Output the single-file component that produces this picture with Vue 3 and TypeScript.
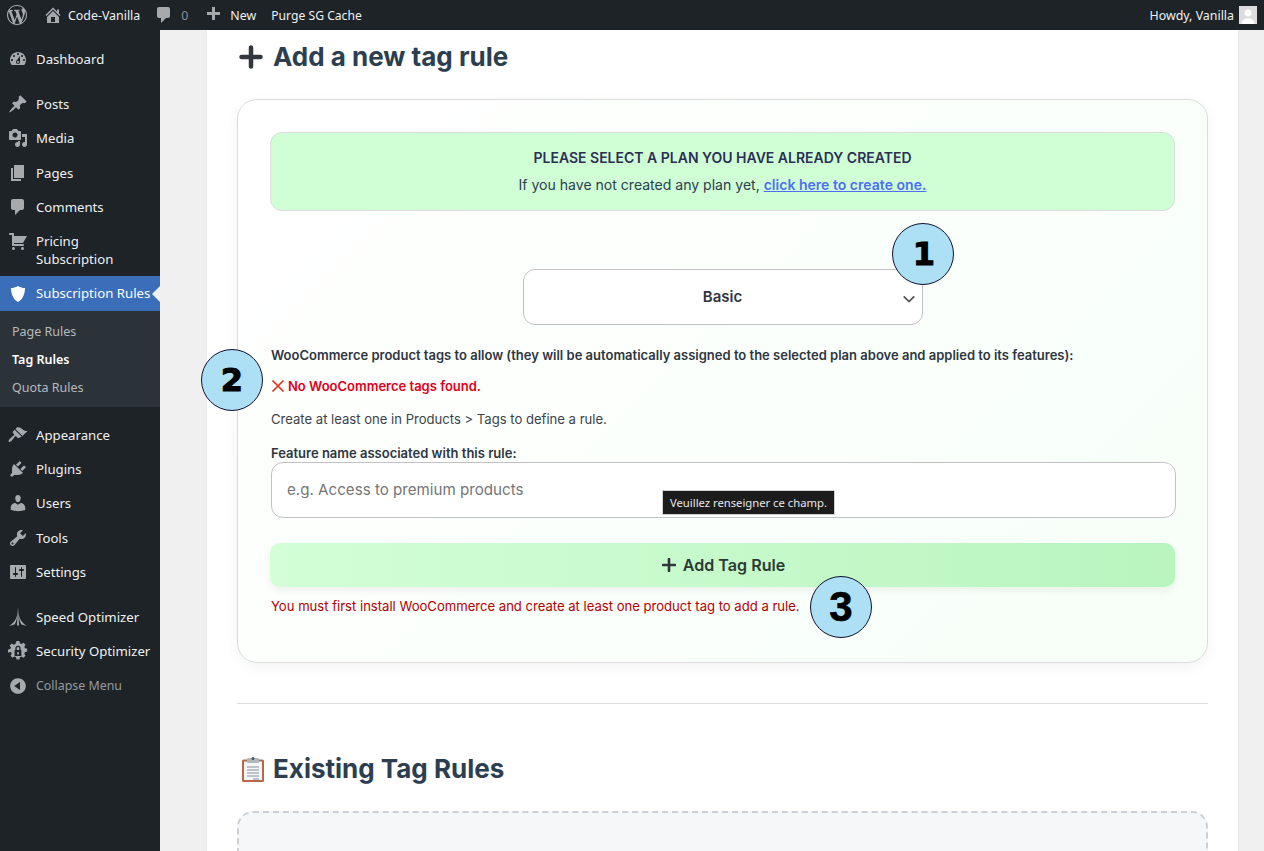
<script setup lang="ts">
// Admin page with the tag rule form, sidebar icons are dashicons paths (20x20)
interface MenuItem { label: string; icon: string; cls?: string }

const icons: Record<string, string> = {
  wp: 'M20 10c0-5.51-4.49-10-10-10C4.48 0 0 4.49 0 10c0 5.52 4.48 10 10 10 5.51 0 10-4.48 10-10zM7.78 15.37L4.37 6.22c.55-.02 1.17-.08 1.17-.08.5-.06.44-1.13-.06-1.11 0 0-1.45.11-2.37.11-.18 0-.37 0-.58-.01C4.12 2.69 6.87 1.11 10 1.11c2.33 0 4.45.87 6.05 2.34-.68-.11-1.65.39-1.65 1.58 0 .74.45 1.36.9 2.1.35.61.55 1.36.55 2.46 0 1.49-1.4 5-1.4 5l-3.03-8.37c.54-.02.82-.17.82-.17.5-.05.44-1.25-.06-1.22 0 0-1.44.12-2.38.12-.87 0-2.33-.12-2.33-.12-.5-.03-.56 1.2-.06 1.22l.92.08 1.26 3.41zM17.41 10c.24-.64.74-1.87.43-4.25.7 1.29 1.05 2.71 1.05 4.25 0 3.29-1.73 6.24-4.4 7.78.97-2.59 1.94-5.2 2.92-7.78zM6.1 18.09C3.12 16.65 1.11 13.53 1.11 10c0-1.3.23-2.48.72-3.59C3.25 10.3 4.67 14.2 6.1 18.09zm4.03-6.63l2.58 6.98c-.86.29-1.76.45-2.71.45-.79 0-1.57-.11-2.29-.33.81-2.38 1.62-4.74 2.42-7.1z',
  home: 'M16 8.5l1.53 1.53-1.06 1.06L10 4.62l-6.47 6.47-1.06-1.06L10 2.5l4 4v-2h2v4zm-6-2.46l6 5.99V18H4v-5.97zM12 17v-5H8v5h4z',
  comment: 'M5 2h9c1.1 0 2 .9 2 2v7c0 1.1-.9 2-2 2h-2l-5 5v-5H5c-1.1 0-2-.9-2-2V4c0-1.1.9-2 2-2z',
  plus: 'M17 7v3h-5v5H9v-5H4V7h5V2h3v5h5z',
  dashboard: 'M3.76 16h12.48c1.1-1.37 1.76-3.11 1.76-5 0-4.42-3.58-8-8-8s-8 3.58-8 8c0 1.89.66 3.63 1.76 5zM10 4c.55 0 1 .45 1 1s-.45 1-1 1-1-.45-1-1 .45-1 1-1zM6 6c.55 0 1 .45 1 1s-.45 1-1 1-1-.45-1-1 .45-1 1-1zm8 0c.55 0 1 .45 1 1s-.45 1-1 1-1-.45-1-1 .45-1 1-1zm-5.37 5.55L12 7v6c0 1.1-.9 2-2 2s-2-.9-2-2c0-.57.24-1.08.63-1.45zM4 10c.55 0 1 .45 1 1s-.45 1-1 1-1-.45-1-1 .45-1 1-1zm12 0c.55 0 1 .45 1 1s-.45 1-1 1-1-.45-1-1 .45-1 1-1zm-5 3c0-.55-.45-1-1-1s-1 .45-1 1 .45 1 1 1 1-.45 1-1z',
  pin: 'M10.44 3.02l1.82-1.82 6.36 6.35-1.83 1.82c-1.05-.68-2.48-.57-3.41.36l-.75.75c-.92.93-1.04 2.35-.35 3.41l-1.83 1.82-2.41-2.41-2.8 2.79c-.42.42-3.38 2.71-3.8 2.29s1.86-3.39 2.28-3.81l2.79-2.79L4.1 9.36l1.83-1.82c1.05.69 2.48.57 3.4-.36l.75-.75c.93-.92 1.05-2.35.36-3.41z',
  media: 'M13 11V4c0-.55-.45-1-1-1h-1.67L9 1H5L3.67 3H2c-.55 0-1 .45-1 1v7c0 .55.45 1 1 1h10c.55 0 1-.45 1-1zM7 4.5c1.38 0 2.5 1.12 2.5 2.5S8.38 9.5 7 9.5 4.5 8.38 4.5 7 5.62 4.5 7 4.5zM14 6h5v10.5c0 1.38-1.12 2.5-2.5 2.5S14 17.88 14 16.5s1.12-2.5 2.5-2.5c.17 0 .34.02.5.05V9h-3V6zm-4 8.05V13h2v3.5c0 1.38-1.12 2.5-2.5 2.5S7 17.88 7 16.5 8.12 14 9.5 14c.17 0 .34.02.5.05z',
  page: 'M6 15V2h10v13H6zm-1 1h8v2H3V5h2v11z',
  cart: 'M6 13h9c.55 0 1 .45 1 1s-.45 1-1 1H5c-.55 0-1-.45-1-1V4H2c-.55 0-1-.45-1-1s.45-1 1-1h3c.55 0 1 .45 1 1v2h13l-4 7H6v1zm-.5 3c.83 0 1.5.67 1.5 1.5S6.33 19 5.5 19 4 18.33 4 17.5 4.67 16 5.5 16zm9 0c.83 0 1.5.67 1.5 1.5s-.67 1.5-1.5 1.5-1.5-.67-1.5-1.5.67-1.5 1.5-1.5z',
  shield: 'M10 2s3 2 7 2c0 11-7 14-7 14S3 15 3 4c4 0 7-2 7-2z',
  brush: 'M14.48 11.06L7.41 3.99l1.5-1.5c.5-.56 2.3-.47 3.51.32 1.21.8 1.43 1.28 2.91 2.1 1.18.64 2.45 1.26 4.45.85zm-.71.71L6.7 4.7 4.93 6.47c-.39.39-.39 1.02 0 1.41l1.06 1.06c.39.39.39 1.03 0 1.42-.6.6-1.43 1.11-2.21 1.69-.35.26-.7.53-1.01.84C1.43 13.71 0 16.06.72 16.78c.72.72 3.07-.71 3.71-1.98.31-.31.58-.66.84-1.01.58-.78 1.09-1.61 1.69-2.21.39-.39 1.03-.39 1.42 0l1.06 1.06c.39.39 1.02.39 1.41 0z',
  plugin: 'M13.11 4.36L9.87 7.6 8 5.73l3.24-3.24c.35-.34 1.05-.2 1.56.32.52.51.66 1.21.31 1.55zm-8 1.77l.91-1.12 9.01 9.01-1.19.84c-.71.71-2.63 1.16-3.82 1.16H6.14L4.9 17.26c-.59.59-1.54.59-2.12 0-.59-.58-.59-1.53 0-2.12l1.24-1.24v-3.88c0-1.13.4-3.19 1.09-3.89zm7.26 3.97l3.24-3.24c.34-.35 1.04-.21 1.55.31.52.51.66 1.21.31 1.55l-3.24 3.25z',
  users: 'M10 9.25c-2.27 0-2.73-3.44-2.73-3.44C7 4.02 7.82 2 9.97 2c2.16 0 2.98 2.02 2.71 3.81 0 0-.41 3.44-2.68 3.44zm0 2.57L12.72 10c2.39 0 4.52 2.33 4.52 4.53v2.49s-3.65 1.13-7.24 1.13c-3.65 0-7.24-1.13-7.24-1.13v-2.49c0-2.25 1.94-4.48 4.47-4.48z',
  tools: 'M16.68 9.77c-1.34 1.34-3.3 1.67-4.95.99l-5.41 6.52c-.99.99-2.59.99-3.58 0s-.99-2.59 0-3.57l6.52-5.42c-.68-1.65-.35-3.61.99-4.95 1.28-1.28 3.12-1.62 4.72-1.06l-2.89 2.89 2.82 2.82 2.86-2.87c.53 1.58.18 3.39-1.08 4.65zM3.81 16.21c.4.39 1.04.39 1.43 0 .4-.4.4-1.04 0-1.43-.39-.4-1.03-.4-1.43 0-.39.39-.39 1.03 0 1.43z',
  settings: 'M18 16V4c0-.55-.45-1-1-1H3c-.55 0-1 .45-1 1v12c0 .55.45 1 1 1h14c.55 0 1-.45 1-1zM8 11h1c.55 0 1 .45 1 1s-.45 1-1 1H8v1.5c0 .28-.22.5-.5.5s-.5-.22-.5-.5V13H6c-.55 0-1-.45-1-1s.45-1 1-1h1V5.5c0-.28.22-.5.5-.5s.5.22.5.5V11zm5-2h-1c-.55 0-1-.45-1-1s.45-1 1-1h1V5.5c0-.28.22-.5.5-.5s.5.22.5.5V7h1c.55 0 1 .45 1 1s-.45 1-1 1h-1v5.5c0 .28-.22.5-.5.5s-.5-.22-.5-.5V9z',
  speed: 'M10 0l.55 8 .45 10.5H9L9.45 8zM9.3 6.5C9 11 6.5 15.5 1 19l5.6-1.6C8.3 15 9.2 11 9.3 6.5zM10.7 6.5c.3 4.5 2.8 9 8.3 12.5l-5.6-1.6C11.7 15 10.8 11 10.7 6.5z',
  security: 'M8.6 0h2.8l.5 2.2 1.6.7 2-1.2 2 2-1.2 2 .7 1.6 2.2.5v2.8l-2.2.5-.7 1.6 1.2 2-2 2-2-1.2-1.6.7-.5 2.2H8.6l-.5-2.2-1.6-.7-2 1.2-2-2 1.2-2-.7-1.6L0 11.4V8.6l2.2-.5.7-1.6-1.2-2 2-2 2 1.2 1.6-.7zM10 4.8A2.6 2.6 0 0 0 7.4 7.4V9H6.6v6h6.8V9h-.8V7.4A2.6 2.6 0 0 0 10 4.8zm0 1.3c.7 0 1.3.6 1.3 1.3V9H8.7V7.4c0-.7.6-1.3 1.3-1.3zM9.2 11h1.6v2.4H9.2z',
  collapse: 'M10 2.16c4.33 0 7.84 3.51 7.84 7.84s-3.51 7.84-7.84 7.84S2.16 14.33 2.16 10 5.71 2.16 10 2.16zm2 11.72V6.12L6.18 9.97z',
}

const topMenu: MenuItem[] = [
  { label: 'Posts', icon: icons.pin },
  { label: 'Media', icon: icons.media },
  { label: 'Pages', icon: icons.page },
  { label: 'Comments', icon: icons.comment },
  { label: 'Pricing Subscription', icon: icons.cart, cls: 'two' },
]
const subMenu = ['Page Rules', 'Tag Rules', 'Quota Rules']
const midMenu: MenuItem[] = [
  { label: 'Appearance', icon: icons.brush },
  { label: 'Plugins', icon: icons.plugin },
  { label: 'Users', icon: icons.users },
  { label: 'Tools', icon: icons.tools },
  { label: 'Settings', icon: icons.settings },
]
const bottomMenu: MenuItem[] = [
  { label: 'Speed Optimizer', icon: icons.speed },
  { label: 'Security Optimizer', icon: icons.security },
  { label: 'Collapse Menu', icon: icons.collapse, cls: 'muted' },
]
</script>

<template>
  <div class="page">
    <header class="adminbar">
      <svg class="bar-ic wp" viewBox="0 0 20 20"><path :d="icons.wp" fill-rule="evenodd" /></svg>
      <span class="bar-item site">
        <svg class="bar-ic" viewBox="0 0 20 20"><path :d="icons.home" fill-rule="evenodd" /></svg>Code-Vanilla
      </span>
      <span class="bar-item comments">
        <svg class="bar-ic" viewBox="0 0 20 20"><path :d="icons.comment" /></svg><span class="count">0</span>
      </span>
      <span class="bar-item new">
        <svg class="bar-ic" viewBox="0 0 20 20"><path :d="icons.plus" /></svg>New
      </span>
      <span class="bar-item purge">Purge SG Cache</span>
      <span class="bar-item howdy">
        Howdy, Vanilla
        <svg class="avatar" viewBox="0 0 18 18">
          <rect width="18" height="18" fill="#dcdcde" />
          <circle cx="9" cy="7" r="3.4" fill="#fff" />
          <path d="M2.5 18c0-4 3-5.6 6.5-5.6s6.5 1.6 6.5 5.6z" fill="#fff" />
        </svg>
      </span>
    </header>

    <div class="body">
      <nav class="sidebar">
        <a class="menu-row">
          <svg class="menu-ic" viewBox="0 0 20 20"><path :d="icons.dashboard" fill-rule="evenodd" /></svg>
          <span>Dashboard</span>
        </a>
        <div class="sep"></div>
        <a v-for="m in topMenu" :key="m.label" class="menu-row" :class="m.cls">
          <svg class="menu-ic" viewBox="0 0 20 20"><path :d="m.icon" fill-rule="evenodd" /></svg>
          <span>{{ m.label }}</span>
        </a>
        <a class="menu-row active">
          <svg class="menu-ic" viewBox="0 0 20 20"><path :d="icons.shield" /></svg>
          <span>Subscription Rules</span>
        </a>
        <div class="submenu">
          <a v-for="s in subMenu" :key="s" class="sub-row" :class="{ on: s === 'Tag Rules' }">{{ s }}</a>
        </div>
        <div class="sep"></div>
        <a v-for="m in midMenu" :key="m.label" class="menu-row">
          <svg class="menu-ic" viewBox="0 0 20 20"><path :d="m.icon" fill-rule="evenodd" /></svg>
          <span>{{ m.label }}</span>
        </a>
        <div class="sep"></div>
        <a v-for="m in bottomMenu" :key="m.label" class="menu-row" :class="m.cls">
          <svg class="menu-ic" viewBox="0 0 20 20"><path :d="m.icon" fill-rule="evenodd" /></svg>
          <span>{{ m.label }}</span>
        </a>
      </nav>

      <main class="main">
        <div class="panel">
          <h2 class="title">
            <svg class="title-plus" viewBox="0 0 24 24"><path d="M12 2.5v19M2.5 12h19" /></svg>
            Add a new tag rule
          </h2>

          <section class="card">
            <div class="notice">
              <strong>PLEASE SELECT A PLAN YOU HAVE ALREADY CREATED</strong>
              <p>If you have not created any plan yet, <a>click here to create one.</a></p>
            </div>

            <div class="select-wrap">
              <div class="select">
                <span>Basic</span>
                <svg class="chev" viewBox="0 0 12 12"><path d="M1.5 3.8 6 8.2l4.5-4.4" /></svg>
              </div>
              <span class="badge b1">1</span>
            </div>

            <p class="label tags-label">WooCommerce product tags to allow (they will be automatically assigned to the selected plan above and applied to its features):</p>
            <p class="err">
              <svg class="x" viewBox="0 0 14 14"><path d="M1.5 1.5l11 11M12.5 1.5l-11 11" /></svg>
              No WooCommerce tags found.
            </p>
            <p class="help">Create at least one in Products &gt; Tags to define a rule.</p>

            <label class="label feature-label">Feature name associated with this rule:</label>
            <div class="input-wrap">
              <input class="input" type="text" placeholder="e.g. Access to premium products" />
              <span class="tooltip">Veuillez renseigner ce champ.</span>
            </div>

            <button class="add" type="button">
              <svg class="add-plus" viewBox="0 0 14 14"><path d="M7 1v12M1 7h12" /></svg>
              Add Tag Rule
            </button>
            <p class="warn">You must first install WooCommerce and create at least one product tag to add a rule.</p>

            <span class="badge b2">2</span>
            <span class="badge b3">3</span>
          </section>

          <hr class="rule" />

          <h2 class="title existing">
            <svg class="clip" viewBox="0 0 22 25">
              <rect x="0" y="2.5" width="22" height="22.5" rx="1.5" fill="#b9664a" />
              <rect x="2" y="4.5" width="18" height="18.5" fill="#f4f6f7" />
              <rect x="5" y="1" width="12" height="5" rx="1" fill="#aeb8bf" />
              <circle cx="11" cy="1.6" r="1.5" fill="#4a5560" />
              <path d="M5 10h12M5 13h12M5 16h12M5 19h12M11 22h6" stroke="#aab3bb" stroke-width="1.4" />
            </svg>
            Existing Tag Rules
          </h2>

          <div class="empty"></div>
        </div>
      </main>
    </div>
  </div>
</template>

<style>
html, body { margin: 0; background: #f0f0f1; }
</style>

<style scoped>
.page { width: 1264px; height: 851px; overflow: hidden; display: flex; flex-direction: column; font-family: "Noto Sans", sans-serif; }
.adminbar {
  height: 30px; flex: none; background: #1d2327; color: #f0f0f1; display: flex; align-items: center;
  font-size: 12.4px; position: relative;
}
.bar-ic { width: 20px; height: 20px; fill: #a7aaad; flex: none; }
.bar-ic.wp { margin-left: 7px; }
.bar-item { display: flex; align-items: center; }
.site { margin-left: 16px; gap: 5px; }
.comments { margin-left: 14px; gap: 7px; color: #8c8f94; }
.new { margin-left: 15px; gap: 7px; }
.purge { margin-left: 15px; font-size: 12.15px; }
.howdy { margin-left: auto; margin-right: 7px; gap: 5px; }
.avatar { width: 18px; height: 18px; border: 0; box-shadow: 0 0 0 1px #8c8f94 inset; }

.body { flex: 1; display: flex; min-height: 0; }
.sidebar { width: 160px; flex: none; background: #1d2327; padding-top: 12px; font-size: 13.2px; color: #f0f0f1; }
.menu-row { display: flex; align-items: center; height: 34.3px; box-sizing: border-box; position: relative; }
.menu-row.two { height: 52px; }
.menu-row.two .menu-ic { align-self: flex-start; margin-top: 7px; }
.menu-row.two span { max-width: 110px; }
.menu-row span { line-height: 18px; }
.menu-ic { width: 20px; height: 20px; fill: #a7aaad; flex: none; margin: 0 8px; }
.menu-row.active { background: #3a6eb8; color: #fff; height: 35px; }
.menu-row.active span { padding-bottom: 2px; }
.menu-row.active .menu-ic { fill: #fff; }
.menu-row.active::after {
  content: ""; position: absolute; right: 0; top: 9.5px;
  border: 8px solid transparent; border-right-color: #f0f0f1;
}
.menu-row.muted { color: #979a9f; font-size: 12.4px; padding-top: 1px; }
.submenu { background: #2c3338; padding: 7px 0 5px; }
.sub-row { display: block; height: 28px; line-height: 28px; padding-left: 12px; font-size: 12.5px; color: #b4b9be; }
.sub-row.on { color: #fff; font-weight: 600; }
.sep { height: 10.6px; }

.main { flex: 1; min-width: 0; padding-left: 47px; }
.panel {
  width: 971px; height: 821px; background: #fff; padding: 9px 30px 0; box-sizing: content-box;
  box-shadow: 0 0 3px rgba(0,0,0,0.06); font-family: Inter, sans-serif; color: #2c3e50;
}
.title { margin: 0; height: 36px; display: flex; align-items: center; font-size: 26px; font-weight: 700; line-height: 36px; color: #2c3e50; }
.title-plus { width: 24px; height: 24px; margin: 0 10px 0 2px; fill: none; stroke: #31373d; stroke-width: 4.5; stroke-linecap: round; }
.card {
  position: relative; margin-top: 24px; height: 564px; box-sizing: border-box; padding: 32px;
  border: 1px solid #dcdcdc; border-radius: 20px; box-shadow: 0 4px 14px rgba(0,0,0,0.05);
  background: linear-gradient(135deg, #fff 0%, #f7fff8 100%);
}
.notice {
  height: 79px; box-sizing: border-box; border: 1px solid #dcdcdc; border-radius: 12px; background: #d0ffd5;
  text-align: center; padding-top: 16px; color: #2c2f55; font-size: 14px; line-height: 18px;
}
.notice strong { font-weight: 600; display: block; font-size: 14px; }
.notice p { margin: 9px 0 0; font-size: 14.06px; color: #2c3e50; }
.notice a { color: #4f6ef7; font-weight: 600; text-decoration: underline; }
.select-wrap { position: relative; width: 400px; margin: 58px auto 0; }
.select {
  height: 56px; box-sizing: border-box; border: 1px solid #c2c2c6; border-radius: 12px; background: #fff; padding-bottom: 2px;
  display: flex; align-items: center; justify-content: center; font-size: 15px; font-weight: 600; color: #2f3640;
}
.chev { position: absolute; right: 7px; top: 23px; width: 14px; height: 14px; fill: none; stroke: #555; stroke-width: 1.6; }
.badge {
  position: absolute; width: 62px; height: 62px; box-sizing: border-box; border-radius: 50%; border: 1.5px solid #101030;
  background: #ade0f5; color: #000; display: flex; align-items: center; justify-content: center;
  font-family: "DejaVu Sans", sans-serif; font-weight: 900; font-size: 32px; line-height: 1; -webkit-text-stroke: 1px #000;
}
.b1 { right: -31px; top: -46px; padding-left: 3px; }
.b2 { left: -37px; top: 249px; }
.b3 { left: 572px; top: 476px; font-family: "Liberation Sans", sans-serif; font-size: 42px; -webkit-text-stroke: 0.6px #000; }
.label { margin: 0; padding-left: 1px; font-size: 13px; font-weight: 600; color: #2f3640; line-height: 18px; display: block; }
.tags-label { margin-top: 21px; }
.err { margin: 13px 0 0; padding-left: 1px; font-size: 13px; font-weight: 600; color: #e0001b; line-height: 18px; display: flex; align-items: center; gap: 3px; }
.x { width: 14px; height: 14px; fill: none; stroke: #e0321e; stroke-width: 1.7; }
.help { margin: 15px 0 0; padding-left: 1px; font-size: 13.08px; line-height: 18px; color: #3c434a; }
.feature-label { margin-top: 16px; }
.input-wrap { position: relative; margin-top: 0; }
.input {
  display: block; width: 905px; height: 56px; box-sizing: border-box; margin-left: 1px; border: 1px solid #c2c2c6; border-radius: 12px;
  background: #fff; padding: 0 15px 2px; font: 15.15px Inter, sans-serif; outline: none;
}
.input::placeholder { color: #757575; opacity: 1; }
.tooltip {
  position: absolute; left: 392px; top: 28px; background: #1c1c1c; color: #e8e8e8; border: 1px solid #d0d0d0;
  font: 11.25px "Noto Sans", sans-serif; padding: 2px 7px; line-height: 19px; white-space: nowrap;
}
.add {
  display: flex; align-items: center; justify-content: center; gap: 7px; width: 100%; height: 44px; margin-top: 25px;
  border: 0; border-radius: 10px; background: linear-gradient(90deg, #d3fed6, #b9f5bf); color: #2c3a35;
  font: 600 16.1px Inter, sans-serif; box-shadow: 0 4px 10px rgba(0,0,0,0.06); padding: 0 0 0 2px;
}
.add-plus { width: 14px; height: 14px; fill: none; stroke: #31373d; stroke-width: 2.6; stroke-linecap: round; }
.warn { margin: 10px 0 0; padding-left: 1px; font-size: 13.08px; line-height: 18px; color: #b30000; }
.rule { margin: 40px 0 0; border: 0; border-top: 1px solid #dcdcde; }
.existing { margin-top: 47px; }
.clip { width: 22px; height: 25px; margin: 0 9px 0 5px; flex: none; }
.empty { margin-top: 24px; height: 200px; border: 2px dashed #ccd0d4; border-radius: 16px; background: #f6f7f9; }
</style>
